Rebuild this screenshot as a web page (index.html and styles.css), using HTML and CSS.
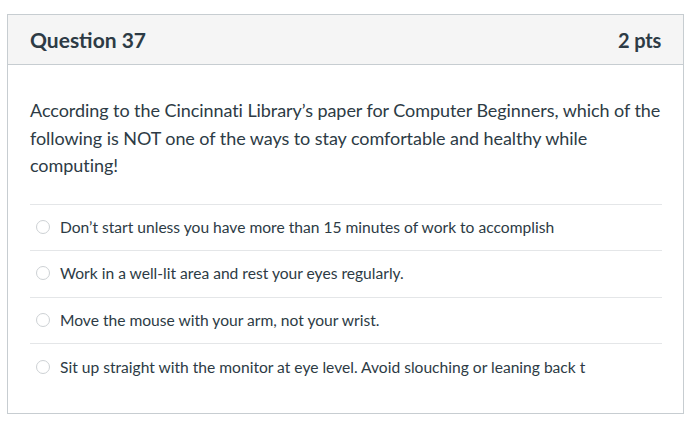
FILE: index.html
```html
<!DOCTYPE html>
<html>
<head>
<meta charset="utf-8">
<link rel="stylesheet" href="styles.css">
</head>
<body>
<div class="card">
  <div class="header">
    <div class="title">Question 37</div>
    <div class="pts">2 pts</div>
  </div>
  <div class="content">
    <p class="question">According to the Cincinnati Library’s paper for Computer Beginners, which of the following is NOT one of the ways to stay comfortable and healthy while computing!</p>
    <div class="answers">
      <label class="answer"><span class="radio"></span><span class="atext">Don’t start unless you have more than 15 minutes of work to accomplish</span></label>
      <label class="answer"><span class="radio"></span><span class="atext">Work in a well-lit area and rest your eyes regularly.</span></label>
      <label class="answer"><span class="radio"></span><span class="atext">Move the mouse with your arm, not your wrist.</span></label>
      <label class="answer"><span class="radio"></span><span class="atext">Sit up straight with the monitor at eye level. Avoid slouching or leaning back t</span></label>
    </div>
  </div>
</div>
</body>
</html>
```

FILE: styles.css
```css
html, body {
  margin: 0;
  padding: 0;
  background: #ffffff;
}
body {
  font-family: Lato, "Open Sans", sans-serif;
  color: #2d3b45;
  padding: 14px 0 0 7px;
}
.card {
  width: 675px;
  height: 398px;
  border: 1px solid #c7cdd1;
  box-sizing: content-box;
}
.header {
  height: 49px;
  background: #f5f5f5;
  border-bottom: 1px solid #c7cdd1;
  display: flex;
  align-items: center;
  justify-content: space-between;
  padding: 0 22px 0 22px;
}
.title {
  font-size: 21px;
  font-weight: 700;
  letter-spacing: 0;
}
.pts {
  font-size: 20px;
  font-weight: 700;
  letter-spacing: -0.2px;
}
.content {
  padding: 32px 22px 0 22px;
}
.question {
  margin: 0;
  font-size: 18px;
  line-height: 27.5px;
  letter-spacing: -0.06px;
}
.answers {
  margin-top: 24px;
  width: 632px;
}
.answer {
  display: flex;
  align-items: center;
  box-sizing: border-box;
  height: 46.6px;
  padding-bottom: 1px;
  border-top: 1px solid #e4e6e8;
  font-size: 15.6px;
}
.radio {
  width: 12px;
  height: 12px;
  border: 1px solid #cdd1d4;
  border-radius: 50%;
  margin-left: 6px;
  margin-right: 10px;
  flex: none;
}
.atext {
  white-space: nowrap;
}
```
